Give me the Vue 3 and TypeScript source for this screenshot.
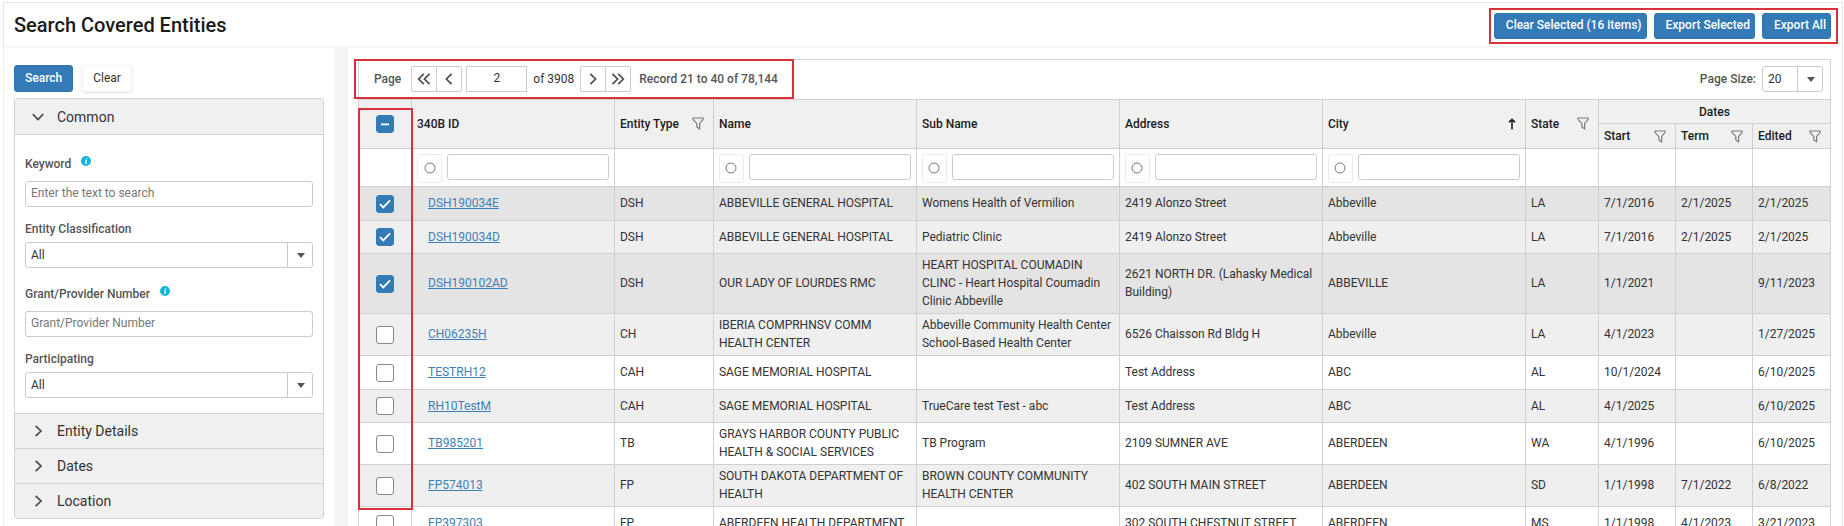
<script setup lang="ts">
import { computed, ref } from 'vue'

interface Entity {
  id: string
  type: string
  name: string
  sub: string
  address: string
  city: string
  state: string
  start: string
  term: string
  edited: string
  selected: boolean
}

const make = (
  selected: boolean,
  id: string,
  type: string,
  name: string,
  sub: string,
  address: string,
  city: string,
  state: string,
  start: string,
  term: string,
  edited: string
): Entity => ({ id, type, name, sub, address, city, state, start, term, edited, selected })

const rows = ref<Entity[]>([
  make(true, 'DSH190034E', 'DSH', 'ABBEVILLE GENERAL HOSPITAL', 'Womens Health of Vermilion', '2419 Alonzo Street', 'Abbeville', 'LA', '7/1/2016', '2/1/2025', '2/1/2025'),
  make(true, 'DSH190034D', 'DSH', 'ABBEVILLE GENERAL HOSPITAL', 'Pediatric Clinic', '2419 Alonzo Street', 'Abbeville', 'LA', '7/1/2016', '2/1/2025', '2/1/2025'),
  make(true, 'DSH190102AD', 'DSH', 'OUR LADY OF LOURDES RMC', 'HEART HOSPITAL COUMADIN CLINC - Heart Hospital Coumadin Clinic Abbeville', '2621 NORTH DR. (Lahasky Medical Building)', 'ABBEVILLE', 'LA', '1/1/2021', '', '9/11/2023'),
  make(false, 'CH06235H', 'CH', 'IBERIA COMPRHNSV COMM HEALTH CENTER', 'Abbeville Community Health Center School-Based Health Center', '6526 Chaisson Rd Bldg H', 'Abbeville', 'LA', '4/1/2023', '', '1/27/2025'),
  make(false, 'TESTRH12', 'CAH', 'SAGE MEMORIAL HOSPITAL', '', 'Test Address', 'ABC', 'AL', '10/1/2024', '', '6/10/2025'),
  make(false, 'RH10TestM', 'CAH', 'SAGE MEMORIAL HOSPITAL', 'TrueCare test Test - abc', 'Test Address', 'ABC', 'AL', '4/1/2025', '', '6/10/2025'),
  make(false, 'TB985201', 'TB', 'GRAYS HARBOR COUNTY PUBLIC HEALTH & SOCIAL SERVICES', 'TB Program', '2109 SUMNER AVE', 'ABERDEEN', 'WA', '4/1/1996', '', '6/10/2025'),
  make(false, 'FP574013', 'FP', 'SOUTH DAKOTA DEPARTMENT OF HEALTH', 'BROWN COUNTY COMMUNITY HEALTH CENTER', '402 SOUTH MAIN STREET', 'ABERDEEN', 'SD', '1/1/1998', '7/1/2022', '6/8/2022'),
  make(false, 'FP397303', 'FP', 'ABERDEEN HEALTH DEPARTMENT', '', '302 SOUTH CHESTNUT STREET', 'ABERDEEN', 'MS', '1/1/1998', '4/1/2023', '3/21/2023')
])

const dateColumns = ['Start', 'Term', 'Edited']
const filterColumns = [
  { label: '340B ID', text: true },
  { label: 'Entity Type', text: false },
  { label: 'Name', text: true },
  { label: 'Sub Name', text: true },
  { label: 'Address', text: true },
  { label: 'City', text: true },
  { label: 'State', text: false },
  { label: 'Start', text: false },
  { label: 'Term', text: false },
  { label: 'Edited', text: false }
]
const closedSections = ['Entity Details', 'Dates', 'Location']

const page = ref('2')
const keyword = ref('')
const grant = ref('')
const allSelected = computed(() => rows.value.every((r) => r.selected))
const someSelected = computed(() => !allSelected.value && rows.value.some((r) => r.selected))

function toggleAll(event: Event) {
  const on = (event.target as HTMLInputElement).checked
  rows.value.forEach((r) => (r.selected = on))
}
</script>

<template>
  <div class="app">
    <header class="topbar">
      <h1>Search Covered Entities</h1>
      <div class="actions">
        <button type="button" class="primary action">Clear Selected (16 items)</button>
        <button type="button" class="primary action">Export Selected</button>
        <button type="button" class="primary action">Export All</button>
      </div>
    </header>

    <div class="body">
      <aside class="sidebar">
        <div class="form-actions">
          <button type="button" class="primary search">Search</button>
          <button type="button" class="clear">Clear</button>
        </div>

        <div class="accordion">
          <button type="button" class="section open" aria-expanded="true">
            <svg width="12" height="12" viewBox="0 0 12 12"><path d="M.8 3.2L6 8.6l5.2-5.4" /></svg>
            Common
          </button>
          <form class="fields" @submit.prevent>
            <div class="field">
              <div class="label-row">
                <label for="keyword">Keyword</label>
                <svg class="info" width="10" height="10" viewBox="0 0 10 10">
                  <circle cx="5" cy="5" r="5" />
                  <path d="M5.7 2v.8M4.3 4.3h1L4.8 7.4h.9" />
                </svg>
              </div>
              <input id="keyword" v-model="keyword" type="text" placeholder="Enter the text to search" />
            </div>
            <div class="field tight">
              <label for="classification">Entity Classification</label>
              <div class="select">
                <select id="classification"><option>All</option></select>
                <span class="arrow"><i></i></span>
              </div>
            </div>
            <div class="field">
              <div class="label-row">
                <label for="grant">Grant/Provider Number</label>
                <svg class="info" width="10" height="10" viewBox="0 0 10 10">
                  <circle cx="5" cy="5" r="5" />
                  <path d="M5.7 2v.8M4.3 4.3h1L4.8 7.4h.9" />
                </svg>
              </div>
              <input id="grant" v-model="grant" type="text" placeholder="Grant/Provider Number" />
            </div>
            <div class="field tight">
              <label for="participating">Participating</label>
              <div class="select">
                <select id="participating"><option>All</option></select>
                <span class="arrow"><i></i></span>
              </div>
            </div>
          </form>
          <button v-for="s in closedSections" :key="s" type="button" class="section" aria-expanded="false">
            <svg width="12" height="12" viewBox="0 0 12 12"><path d="M3.6 .8L9 6l-5.4 5.2" /></svg>
            {{ s }}
          </button>
        </div>
      </aside>

      <main class="content">
        <div class="grid">
          <div class="pager">
            <div class="pager-nav">
              <label for="page">Page</label>
              <div class="btn-pair">
                <button type="button" aria-label="First page">
                  <svg width="14" height="12" viewBox="0 0 14 12"><path d="M6.8 .8L1.6 6l5.2 5.2M12.6 .8L7.4 6l5.2 5.2" /></svg>
                </button>
                <button type="button" aria-label="Previous page">
                  <svg width="14" height="12" viewBox="0 0 14 12"><path d="M9.6 .8L4.4 6l5.2 5.2" /></svg>
                </button>
              </div>
              <input id="page" v-model="page" class="page-input" type="text" />
              <span class="of">of 3908</span>
              <div class="btn-pair">
                <button type="button" aria-label="Next page">
                  <svg width="14" height="12" viewBox="0 0 14 12"><path d="M4.4 .8L9.6 6l-5.2 5.2" /></svg>
                </button>
                <button type="button" aria-label="Last page">
                  <svg width="14" height="12" viewBox="0 0 14 12"><path d="M1.4 .8L6.6 6l-5.2 5.2M7.2 .8L12.4 6l-5.2 5.2" /></svg>
                </button>
              </div>
              <span class="record">Record 21 to 40 of 78,144</span>
            </div>
            <div class="page-size">
              <label for="size">Page Size:</label>
              <div class="select small">
                <select id="size"><option>20</option></select>
                <span class="arrow"><i></i></span>
              </div>
            </div>
          </div>

          <div class="table-wrap">
            <div class="mark"></div>
            <table>
              <colgroup>
                <col class="c-check" />
                <col />
                <col class="c-type" />
                <col span="4" />
                <col class="c-state" />
                <col class="c-date" span="3" />
              </colgroup>
              <thead>
                <tr class="head-top">
                  <th rowspan="2" class="check">
                    <label class="box">
                      <input
                        type="checkbox"
                        aria-label="Select all"
                        :checked="allSelected"
                        :indeterminate="someSelected"
                        @change="toggleAll"
                      />
                      <svg width="18" height="18" viewBox="0 0 18 18"><path d="M5 9.4h8" /></svg>
                    </label>
                  </th>
                  <th rowspan="2">340B ID</th>
                  <th rowspan="2">
                    <div class="th">
                      Entity Type
                      <svg class="funnel" width="12" height="13" viewBox="0 0 12 13"><path d="M1 1h10v1.6L7.6 6.4v5.4L4.8 10V6.4L1 2.6z" /></svg>
                    </div>
                  </th>
                  <th rowspan="2">Name</th>
                  <th rowspan="2">Sub Name</th>
                  <th rowspan="2">Address</th>
                  <th rowspan="2">
                    <div class="th sorted">
                      City
                      <svg class="sort" width="8" height="12" viewBox="0 0 8 12"><path d="M4 11.5V1.5M1 4.4l3-3 3 3" /></svg>
                    </div>
                  </th>
                  <th rowspan="2">
                    <div class="th">
                      State
                      <svg class="funnel" width="12" height="13" viewBox="0 0 12 13"><path d="M1 1h10v1.6L7.6 6.4v5.4L4.8 10V6.4L1 2.6z" /></svg>
                    </div>
                  </th>
                  <th colspan="3" class="group">Dates</th>
                </tr>
                <tr class="head-sub">
                  <th v-for="d in dateColumns" :key="d">
                    <div class="th">
                      {{ d }}
                      <svg class="funnel" width="12" height="13" viewBox="0 0 12 13"><path d="M1 1h10v1.6L7.6 6.4v5.4L4.8 10V6.4L1 2.6z" /></svg>
                    </div>
                  </th>
                </tr>
                <tr class="filters">
                  <td></td>
                  <td v-for="f in filterColumns" :key="f.label">
                    <div v-if="f.text" class="filter">
                      <button type="button" :aria-label="'Filter mode for ' + f.label">
                        <svg width="12" height="12" viewBox="0 0 12 12"><circle cx="6" cy="6" r="5" /></svg>
                      </button>
                      <input type="text" :aria-label="'Filter ' + f.label" />
                    </div>
                  </td>
                </tr>
              </thead>
              <tbody>
                <tr v-for="r in rows" :key="r.id" :class="{ selected: r.selected }">
                  <td class="check">
                    <label class="box">
                      <input v-model="r.selected" type="checkbox" :aria-label="'Select ' + r.id" />
                      <svg v-if="r.selected" width="18" height="18" viewBox="0 0 18 18"><path d="M4 9.2l3.3 3.2L14 5.4" /></svg>
                    </label>
                  </td>
                  <td class="id"><a href="#">{{ r.id }}</a></td>
                  <td>{{ r.type }}</td>
                  <td>{{ r.name }}</td>
                  <td>{{ r.sub }}</td>
                  <td>{{ r.address }}</td>
                  <td>{{ r.city }}</td>
                  <td>{{ r.state }}</td>
                  <td>{{ r.start }}</td>
                  <td>{{ r.term }}</td>
                  <td>{{ r.edited }}</td>
                </tr>
              </tbody>
            </table>
          </div>
        </div>
      </main>
    </div>
  </div>
</template>

<style>
body {
  background: #fff;
}
</style>

<style scoped>
.app,
.app * {
  box-sizing: border-box;
}
.app {
  display: flex;
  flex-direction: column;
  height: 100vh;
  overflow: hidden;
  padding: 2px 1px 0 3px;
  font-family: Roboto, 'Liberation Sans', sans-serif;
  font-size: 12px;
  line-height: 18px;
  color: #333;
}
button,
input,
select {
  font: inherit;
  color: inherit;
  margin: 0;
}
svg {
  display: block;
  flex: none;
  fill: none;
}
.topbar {
  display: flex;
  flex: none;
  justify-content: space-between;
  align-items: center;
  height: 46px;
  padding: 0 4px 0 10px;
  border: 1px solid #e6e6ea;
  border-bottom: 2px solid #f5f5f5;
}
h1 {
  margin: 0;
  font-size: 20px;
  line-height: 24px;
  font-weight: 500;
  color: #1b1b1b;
}
.actions {
  display: flex;
  gap: 7px;
  margin-top: 3px;
  padding: 3px 5px 3px 3px;
  border: 2px solid #d9303b;
}
.primary {
  background: #337ab7;
  border: 1px solid #2e75b2;
  border-radius: 3px;
  color: #fff;
  font-weight: 500;
}
.action {
  height: 26px;
  padding: 0 4px 2px 11px;
}
.body {
  display: flex;
  flex: 1;
  align-items: stretch;
  min-height: 0;
  border-left: 1px solid #eee;
  border-right: 1px solid #e6e6ea;
}
.sidebar {
  flex: none;
  width: 330px;
  padding: 17px 10px 0;
}
.form-actions {
  display: flex;
  gap: 9px;
  margin-bottom: 6px;
}
.search,
.clear {
  height: 27px;
  padding: 0 10px 2px;
}
.clear {
  background: #fff;
  border: 1px solid #f6f6f6;
  border-radius: 3px;
  box-shadow: 0 1px 3px rgba(0, 0, 0, 0.12);
}
.accordion {
  border: 1px solid #d2d2d2;
  border-radius: 3px;
  overflow: hidden;
}
.section {
  display: flex;
  align-items: center;
  gap: 13px;
  width: 100%;
  height: 35px;
  padding: 0 17px;
  border: 0;
  border-top: 1px solid #d2d2d2;
  background: #f0f0f0;
  font-size: 14px;
  color: #333;
}
.section.open {
  height: 36px;
  border-top: 0;
  border-bottom: 1px solid #d2d2d2;
}
.section svg,
.btn-pair svg {
  stroke: #4c4c4c;
  stroke-width: 1.7;
}
.fields {
  padding: 20px 10px 11px;
  display: flex;
  flex-direction: column;
  gap: 13px;
}
.field {
  display: flex;
  flex-direction: column;
  gap: 8px;
}
.field.tight {
  gap: 4px;
  margin-bottom: 4px;
}
.label-row {
  display: flex;
  gap: 10px;
}
.field label,
.pager label,
.record {
  font-weight: 500;
  color: #555;
}
.info {
  margin-top: 1px;
  fill: #10b5dc;
}
.info path {
  stroke: #fff;
  stroke-width: 1.2;
}
input[type='text'],
select {
  width: 100%;
  height: 26px;
  padding: 0 5px 2px;
  border: 1px solid #ccc;
  border-radius: 3px;
  background: #fff;
  appearance: none;
  outline: 0;
}
select {
  padding-bottom: 0;
}
input::placeholder {
  color: #777;
  opacity: 1;
}
.select {
  display: grid;
}
.select > * {
  grid-area: 1 / 1;
}
.arrow {
  justify-self: end;
  display: grid;
  place-items: center;
  width: 26px;
  border-left: 1px solid #ccc;
  pointer-events: none;
}
.arrow i {
  border: 4px solid transparent;
  border-top: 5px solid #555;
  border-bottom: 0;
}
.content {
  flex: 1;
  min-width: 0;
  border-left: 14px solid #f5f5f5;
  padding: 11px 11px 0 10px;
}
.grid {
  border: 1px solid #d5d5d5;
}
.pager {
  display: flex;
  justify-content: space-between;
  align-items: center;
  height: 40px;
  margin: -1px 0 0 -5px;
}
.pager-nav {
  display: flex;
  align-items: center;
  height: 40px;
  padding: 0 14px 0 18px;
  border: 2px solid #d9303b;
}
.btn-pair {
  display: flex;
}
.pager-nav > label {
  margin-right: 10px;
}
.btn-pair button {
  display: grid;
  place-items: center;
  width: 26px;
  height: 26px;
  padding: 0;
  border: 1px solid #ccc;
  background: #fff;
}
.btn-pair button + button {
  margin-left: -1px;
}
.btn-pair button:first-child {
  border-radius: 2px 0 0 2px;
}
.btn-pair button:last-child {
  border-radius: 0 2px 2px 0;
}
input[type='text'].page-input {
  width: 61px;
  margin: 0 6px 0 4px;
  text-align: center;
  border-radius: 0;
}
.of {
  margin-right: 6px;
}
.record {
  margin-left: 8px;
}
.page-size {
  display: flex;
  align-items: center;
  gap: 6px;
  padding-right: 7px;
}
.select.small {
  width: 61px;
}
.table-wrap {
  position: relative;
}
.mark {
  position: absolute;
  z-index: 1;
  left: -1px;
  top: 9px;
  width: 55px;
  height: 402px;
  border: 2px solid #d9303b;
  pointer-events: none;
}
table {
  width: 100%;
  table-layout: fixed;
  border-collapse: separate;
  border-spacing: 0;
}
.c-check {
  width: 53px;
}
.c-type {
  width: 99px;
}
.c-state {
  width: 73px;
}
.c-date {
  width: 77px;
}
th,
td {
  padding: 2px 5px 3px;
  border-right: 1px solid #d0d0d0;
  border-bottom: 1px solid #d0d0d0;
  text-align: left;
  vertical-align: middle;
}
tr > :last-child {
  border-right: 0;
}
th {
  background: #f0f0f0;
  font-weight: 500;
  color: #1b1b1b;
}
th.check,
td.check {
  padding: 0;
}
.head-top th {
  height: 25px;
  border-top: 1px solid #d0d0d0;
}
.head-top .group {
  text-align: center;
  padding: 0;
}
.head-sub th {
  height: 25px;
  padding: 0 5px;
}
.th {
  display: flex;
  justify-content: space-between;
  align-items: center;
  padding-right: 4px;
}
.funnel {
  stroke: #777b80;
  stroke-width: 1.2;
}
.sort {
  stroke: #222;
  stroke-width: 1.6;
}
.filters td {
  height: 38px;
  padding: 4px 5px 3px;
}
.filter {
  display: flex;
  align-items: flex-start;
  gap: 5px;
}
.filter button {
  display: grid;
  place-items: center;
  flex: none;
  width: 25px;
  height: 29px;
  padding: 0;
  border: 1px solid #ececec;
  border-radius: 3px;
  background: #fff;
}
.filter circle {
  stroke: #777;
}
.filter input {
  flex: 1;
  min-width: 0;
}
tbody td {
  height: 34px;
}
tbody tr:nth-child(even) td {
  background: #efefef;
  height: 33px;
}
tbody tr.selected:nth-child(odd) td {
  background: #e4e4e4;
}
tbody td.id {
  padding-left: 16px;
}
a {
  color: #3f7fb8;
  text-decoration: underline;
}
.box {
  display: grid;
  width: 18px;
  margin: 0 auto;
}
.box > * {
  grid-area: 1 / 1;
}
.box input {
  width: 18px;
  height: 18px;
  border: 1px solid #888;
  border-radius: 3px;
  background: #fff;
  appearance: none;
}
.box input:checked,
.box input:indeterminate {
  border-color: #337ab7;
  background: #337ab7;
}
.box svg {
  stroke: #fff;
  stroke-width: 1.8;
  pointer-events: none;
}
</style>
